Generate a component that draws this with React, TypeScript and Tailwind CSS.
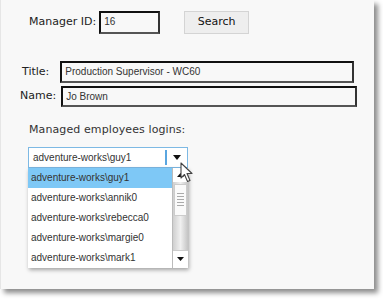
import React from 'react';

const labelFont = { fontFamily: '"DejaVu Sans", Verdana, sans-serif' };
const inputFont = { fontFamily: '"Liberation Sans", Arial, sans-serif' };

const logins = [
  'adventure-works\\guy1',
  'adventure-works\\annik0',
  'adventure-works\\rebecca0',
  'adventure-works\\margie0',
  'adventure-works\\mark1',
];

const TextBox = ({ value, className }: { value: string; className: string }) => (
  <div
    style={inputFont}
    className={`flex items-start pl-[3px] pt-[1px] text-[10px] text-[#333] bg-[#f8f8f8] border-2 border-t-[#111] border-l-[#111] border-r-[#333] border-b-[#555] ${className}`}
  >
    {value}
  </div>
);

const Cursor = () => (
  <svg width="16" height="22" viewBox="0 0 16 22" className="absolute left-[179px] top-[162px]">
    <path
      d="M1 1 L1 16 L4.5 12.5 L7.5 19.5 L10 18.5 L7 11.5 L12 11.5 Z"
      fill="#fff"
      stroke="#444"
      strokeWidth="1.1"
      strokeLinejoin="round"
    />
  </svg>
);

export default function App() {
  return (
    <div className="w-[383px] h-[300px] bg-white">
      <div className="relative w-[374px] h-[289px] bg-[#f8f8f8] border-l border-[#e6e6e6] shadow-[4px_4px_5px_rgba(0,0,0,0.45)]">
        {/* manager search row */}
        <div className="flex items-center pt-[11px]">
          <span style={labelFont} className="ml-[28px] text-[11px] text-[#222]">Manager ID:</span>
          <TextBox value="16" className="ml-[3px] w-[61px] h-[23px]" />
          <button
            style={labelFont}
            className="ml-[24px] w-[65px] h-[23px] text-[11px] text-[#111] bg-[#eeeeee] border border-[#d4d4d4]"
          >
            Search
          </button>
        </div>

        {/* details */}
        <div className="flex items-center mt-[27px]">
          <span style={labelFont} className="ml-[21px] text-[11px] text-[#222]">Title:</span>
          <TextBox value="Production Supervisor - WC60" className="ml-[11px] w-[294px] h-[22px]" />
        </div>
        <div className="flex items-center mt-[3px]">
          <span style={labelFont} className="ml-[19px] text-[11px] text-[#222]">Name:</span>
          <TextBox value="Jo Brown" className="ml-[5px] w-[296px] h-[21px]" />
        </div>

        <div style={labelFont} className="ml-[28px] mt-[15px] text-[11px] text-[#333] tracking-[0.1px]">
          Managed employees logins:
        </div>

        {/* combo box */}
        <div className="ml-[27px] mt-[8px] w-[160px]">
          <div className="flex items-center h-[21px] bg-white border border-[#7db9e4]">
            <span style={inputFont} className="flex-1 pl-[4px] text-[10px] text-[#333]">adventure-works\guy1</span>
            <span className="w-[2px] h-[15px] bg-[#5aa6e0]" />
            <span className="w-[20px] flex justify-center">
              <svg width="8" height="5" viewBox="0 0 8 5"><path d="M0 0 L8 0 L4 5 Z" fill="#111" /></svg>
            </span>
          </div>
          <div className="flex h-[100px] bg-white shadow-[1px_2px_4px_rgba(0,0,0,0.35)]">
            <div style={inputFont} className="flex-1 flex flex-col text-[10px] text-[#333]">
              {logins.map((l, i) => (
                <div key={l} className={`h-[20px] flex items-center pl-[3px] ${i === 0 ? 'bg-[#7ec8f6]' : ''}`}>
                  {l}
                </div>
              ))}
            </div>
            {/* scrollbar */}
            <div className="w-[16px] flex flex-col border-l border-[#bbb] bg-[linear-gradient(90deg,#cfcfcf,#f0f0f0_50%,#c4c4c4)]">
              <div className="h-[14px] flex items-center justify-center bg-white">
                <svg width="7" height="4" viewBox="0 0 7 4"><path d="M0 4 L7 4 L3.5 0 Z" fill="#111" /></svg>
              </div>
              <div className="mt-[2px] mx-[1px] h-[32px] flex flex-col items-center justify-center gap-[2px] bg-[#fafafa] border border-[#ccc]">
                {[0, 1, 2, 3, 4].map((k) => (
                  <span key={k} className="w-[7px] h-px bg-[#aaa]" />
                ))}
              </div>
              <div className="flex-1" />
              <div className="h-[18px] flex items-center justify-center bg-white border-t border-[#ccc]">
                <svg width="7" height="4" viewBox="0 0 7 4"><path d="M0 0 L7 0 L3.5 4 Z" fill="#111" /></svg>
              </div>
            </div>
          </div>
        </div>

        <Cursor />
      </div>
    </div>
  );
}
